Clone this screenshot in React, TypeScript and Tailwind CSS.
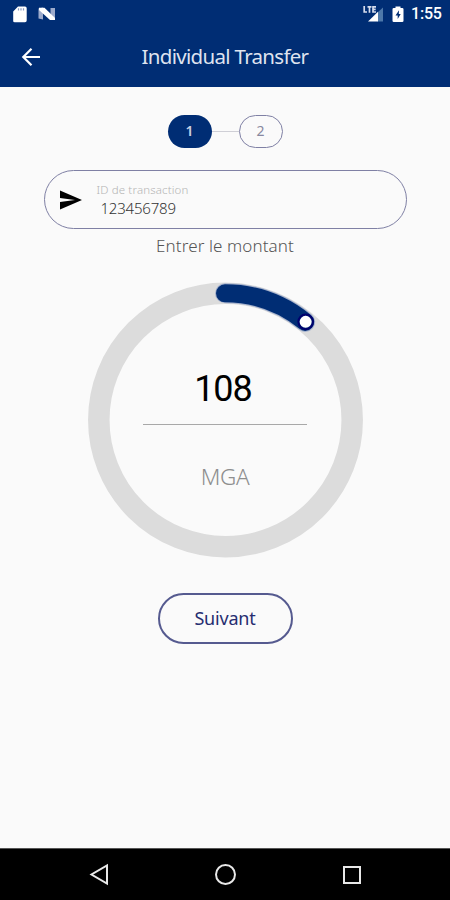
const CX = 138;
const CY = 138;
const RADIUS = 126.7;
const PROGRESS = 0.109;

const angle = PROGRESS * 2 * Math.PI;
const knobX = CX + RADIUS * Math.sin(angle);
const knobY = CY - RADIUS * Math.cos(angle);
const arcPath = `M${CX} ${CY - RADIUS}A${RADIUS} ${RADIUS} 0 0 1 ${knobX} ${knobY}`;

function StatusBar() {
  return (
    <div className="flex h-7 items-center pl-[13px] pr-[8px]">
      <svg width="14" height="17" viewBox="0 0 14 17" className="block">
        <path d="M5 .5h7a1.7 1.7 0 0 1 1.7 1.7v12.3a1.7 1.7 0 0 1-1.7 1.7H1.7A1.5 1.5 0 0 1 .2 14.5V5.4z" fill="#fff" />
        <path d="M5.5 2.3v2.2M8 2.3v2.2M10.5 2.3v2.2" stroke="#8c9bc2" strokeWidth="1.2" />
      </svg>
      <svg width="18" height="14" viewBox="0 0 18 14" className="ml-[11px] block">
        <path d="M.5 1.5 5 .5v12l-4.5-1z" fill="#9dabcc" />
        <path d="M12.500 1h4.500v11l-4.500 1z" fill="#9dabcc" />
        <path d="M1 .8h5.500L17 11v2h-5L1 3z" fill="#fff" />
      </svg>
      <svg width="21" height="17" viewBox="0 0 21 17" className="ml-auto block">
        <path d="M20 1.500V15.500H14.500V6.500z" fill="#4d78aa" />
        <path d="M15 5.800V15.500H5z" fill="#fff" />
        <path d="M1.200 0v6h2.800M4.500.8h4M6.500.8v6M13 .8H10v5.200h3M10 3.300h2.700" fill="none" stroke="#d5dced" strokeWidth="1.700" />
      </svg>
      <svg width="12" height="17" viewBox="0 0 12 17" className="ml-[8px] block">
        <path d="M3.500 2V.5h5V2h1.700A1.300 1.300 0 0 1 11.500 3.300v11.400a1.300 1.300 0 0 1-1.300 1.300H1.800A1.300 1.300 0 0 1 .5 14.700V3.300A1.300 1.300 0 0 1 1.800 2z" fill="#fff" />
        <path d="M7 4.200 3.500 9.500h2.200V13L8.700 8H6.800z" fill="#002d74" />
      </svg>
      <span className="ml-[7px] w-[31px] whitespace-nowrap font-[Roboto] text-[16px] font-medium leading-7 tracking-[-0.2px] text-white">
        1:55
      </span>
    </div>
  );
}

function AppBar() {
  return (
    <div className="grid h-[59px] grid-cols-[60px_1fr_60px] items-center pb-[1px]">
      <svg width="20" height="20" viewBox="0 0 20 20" className="ml-[21px] block">
        <path d="M19 10H2.500M10.500 1.800 2.300 10l8.200 8.200" fill="none" stroke="#fff" strokeWidth="2.200" />
      </svg>
      <h1 className="whitespace-nowrap pb-[2px] text-center text-[20.500px] leading-6 tracking-[-0.7px] text-[#dfe3ef]">
        Individual Transfer
      </h1>
    </div>
  );
}

function Steps() {
  return (
    <div className="flex items-center justify-center text-[14px] leading-none">
      <div className="flex h-[33px] w-[44px] items-center justify-center rounded-full bg-[#002d74] pb-[2px] font-semibold text-[#c9d0e2]">
        1
      </div>
      <div className="h-px w-[27px] bg-[#cfcfd6]" />
      <div className="flex h-[33px] w-[44px] items-center justify-center rounded-full border border-[#7f80a4] pb-[2px] text-[#8888a0]">
        2
      </div>
    </div>
  );
}

function AmountDial() {
  return (
    <div className="relative mt-[24px] h-[276px] w-[276px]">
      <svg width="276" height="276" viewBox="0 0 276 276" className="absolute inset-0">
        <circle cx={CX + 0.5} cy={CY} r={RADIUS} fill="none" stroke="#dcdcdc" strokeWidth="21.500" />
        <path d={arcPath} fill="none" stroke="#a3b0cc" strokeWidth="20" strokeLinecap="round" />
        <path d={arcPath} fill="none" stroke="#002d74" strokeWidth="18" strokeLinecap="round" />
        <circle cx={knobX + 0.5} cy={knobY} r="7.300" fill="none" stroke="#00006e" strokeWidth="2" />
        <circle cx={knobX + 0.5} cy={knobY} r="6" fill="#fff" />
      </svg>
      <div className="relative flex flex-col items-center pt-[87px]">
        <div className="h-[56px] w-[164px] border-b border-[#a8a8a8] pr-[4px] text-center font-[Roboto] text-[36px] leading-[41px] tracking-[-1px] text-black">
          108
        </div>
        <div className="mt-[37px] text-[22.500px] font-light leading-[30px] tracking-[-0.3px] text-[#8e8e8e]">MGA</div>
      </div>
    </div>
  );
}

export default function App() {
  return (
    <div className="flex h-[900px] w-[450px] flex-col overflow-hidden bg-[#fafafa] font-['Noto_Sans',sans-serif]">
      <header className="h-[87px] bg-[#002d74]">
        <StatusBar />
        <AppBar />
      </header>

      <main className="flex flex-1 flex-col items-center pt-[28px]">
        <Steps />

        <div className="mt-[22px] flex h-[59px] w-[363px] items-center rounded-full border border-[#7f80a4] pl-[15px]">
          <svg width="23" height="20" viewBox="0 0 23 20" className="block">
            <path d="M0 .5 22 10 0 19.500V12L15 10 0 8z" fill="#000" />
          </svg>
          <div className="ml-[14px] flex flex-col pb-[1px]">
            <span className="text-[11.500px] font-light leading-[18px] tracking-[0.150px] text-[#b4b4b4]">
              ID de transaction
            </span>
            <span className="pl-[4px] text-[15px] font-light leading-[19px] tracking-[-0.200px] text-[#333333]">
              123456789
            </span>
          </div>
        </div>

        <p className="mt-[5px] text-[17px] font-light leading-[24px] tracking-[0.100px] text-[#555555]">
          Entrer le montant
        </p>

        <AmountDial />

        <button className="mt-[35px] h-[51px] w-[135px] rounded-full border-2 border-[#555a8f] text-[18px] tracking-[-0.200px] text-[#262d70]">
          Suivant
        </button>
      </main>

      <nav className="flex h-[52px] items-center justify-between border-t border-[#555555] bg-black pl-[89px] pr-[87px]">
        <svg width="22" height="24" viewBox="0 0 22 24" className="block">
          <path d="M18 2.500v18L2.500 11.500z" fill="none" stroke="#e8e8e8" strokeWidth="2" />
        </svg>
        <svg width="22" height="24" viewBox="0 0 22 24" className="block">
          <circle cx="10.500" cy="11.500" r="9.500" fill="none" stroke="#e8e8e8" strokeWidth="2" />
        </svg>
        <svg width="22" height="24" viewBox="0 0 22 24" className="block">
          <rect x="3" y="4" width="16" height="16" fill="none" stroke="#e8e8e8" strokeWidth="2" />
        </svg>
      </nav>
    </div>
  );
}
